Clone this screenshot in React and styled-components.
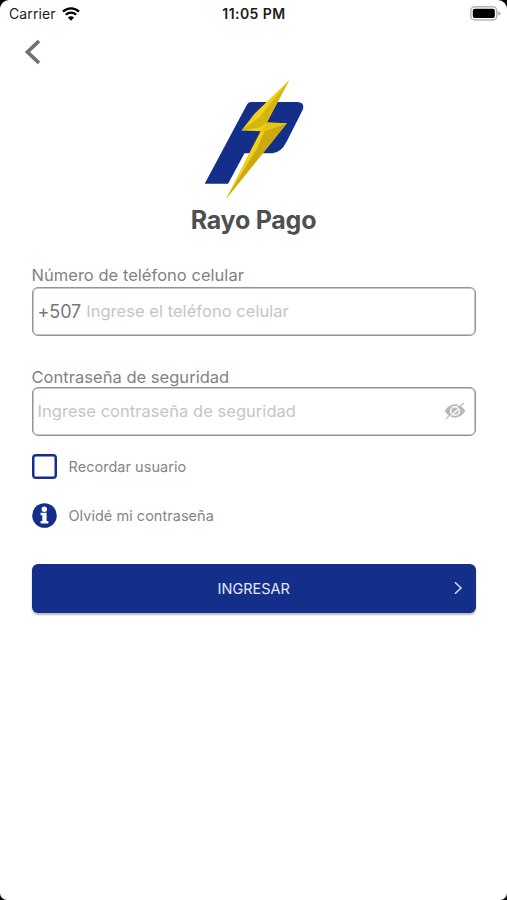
import React, { useState } from "react";
import styled, { createGlobalStyle } from "styled-components";

const GlobalStyle = createGlobalStyle`
  * {
    box-sizing: border-box;
  }

  body {
    margin: 0;
    background-color: #000;
    font-family: Inter, "Liberation Sans", sans-serif;
  }
`;

// styled components
const Screen = styled.div`
  width: 100%;
  height: 100vh;
  overflow: hidden;
  background-color: #fff;
  border-radius: 9px 9px 7px 7px;
`;

const StatusBar = styled.div`
  display: grid;
  grid-template-columns: 1fr auto 1fr;
  align-items: center;
  height: 27px;
  padding: 0 6px 0 9px;
  color: #1c1c1c;
`;

const CarrierBox = styled.div`
  display: flex;
  align-items: center;
  gap: 6px;
`;

const Carrier = styled.span`
  font-size: 14px;
  letter-spacing: 0.1px;
`;

const Clock = styled.span`
  margin-right: 2px;
  font-size: 14px;
  font-weight: 600;
  letter-spacing: 0.45px;
`;

const BatteryIcon = styled.svg`
  justify-self: end;
`;

const TopBar = styled.div`
  display: flex;
  align-items: center;
  height: 50px;
  padding-left: 23px;
`;

const BackButton = styled.button`
  display: flex;
  padding: 0;
  border: none;
  background: none;
`;

const Brand = styled.div`
  display: flex;
  flex-direction: column;
  align-items: center;
  margin-top: 1px;
`;

const BrandName = styled.h1`
  margin: 3px 0 0;
  font-size: 25px;
  line-height: 30px;
  font-weight: 700;
  letter-spacing: -0.25px;
  color: #4f4f4f;
`;

const Form = styled.form`
  display: flex;
  flex-direction: column;
  padding: 0 31px 0 31.5px;
  margin-top: 30px;
`;

const Field = styled.div`
  display: flex;
  flex-direction: column;
  margin-bottom: ${(props) => props.$gap};
`;

const Label = styled.label`
  height: ${(props) => props.$height};
  line-height: 20px;
  font-size: 16.5px;
  letter-spacing: 0.03px;
  color: #828282;
`;

const InputBox = styled.div`
  display: flex;
  align-items: center;
  height: 49px;
  padding: 0 9px 0 5px;
  border: 1px solid #949494;
  border-radius: 6px;
  box-shadow: inset 0 0 0 0.5px #949494;
`;

const Prefix = styled.span`
  margin-right: 5px;
  font-size: 18px;
  letter-spacing: -0.1px;
  color: #777;
`;

const Input = styled.input`
  flex: 1;
  min-width: 0;
  padding: 0;
  border: none;
  outline: none;
  background: none;
  font-family: inherit;
  font-size: 16.5px;
  letter-spacing: 0.04px;
  color: #777;

  &::placeholder {
    color: #c5c5c7;
    opacity: 1;
  }
`;

const IconButton = styled.button`
  display: flex;
  padding: 0;
  border: none;
  background: none;
`;

const OptionRow = styled.div`
  display: flex;
  align-items: center;
  gap: 12px;
  height: 25px;
  margin-bottom: 24px;
  font-size: 14.5px;
  letter-spacing: 0.03px;
  color: #858585;
`;

const CheckBox = styled.button`
  width: 25px;
  height: 25px;
  padding: 0;
  border: 2px solid #142f8a;
  border-radius: 4px;
  background-color: ${(props) => (props.$checked ? "#142f8a" : "#fff")};
  box-shadow: inset 0 0 0 0.5px #142f8a;
`;

const SubmitButton = styled.button`
  display: grid;
  grid-template-columns: 1fr auto 1fr;
  align-items: center;
  height: 49px;
  margin-top: 12px;
  padding: 0 13px;
  border: none;
  border-radius: 6px;
  background-color: #142f8a;
  box-shadow: 0 2px 2px rgba(0, 0, 0, 0.28);
  color: #e3e8f6;
  font-family: inherit;
  font-size: 14.5px;
`;

const SubmitText = styled.span`
  grid-column: 2;
`;

const SubmitArrow = styled.svg`
  justify-self: end;
`;

function Logo() {
  return (
    <svg width="102" height="123.7" viewBox="40 25 305 370">
      <path
        d="M184 97H322Q346 98 338 121L290 216Q273 249 248 250H164L115 341H45L170 107Q175 97 184 97Z"
        fill="#142f8a"
      />
      {/* bolt */}
      <path d="M298 31L194 132L155 182L212 184L108 388L291 160L231 158Z" fill="#f0d01a" />
      <path d="M298 31L208 143L155 182L210 173L231 158Z" fill="#d6b510" />
      <path d="M291 160L224 184L200 238L108 388Z" fill="#cbaa10" />
      <path d="M231 158L291 160L224 184L212 184Z" fill="#e6c416" />
    </svg>
  );
}

function App() {
  const [remember, setRemember] = useState(false);
  const [showPassword, setShowPassword] = useState(false);

  return (
    <Screen>
      <GlobalStyle />
      <StatusBar>
        <CarrierBox>
          <Carrier>Carrier</Carrier>
          <svg width="18" height="14" viewBox="0 0 18 14" fill="none" stroke="#000">
            <path d="M1 4.6C5.5.2 12.5.2 17 4.6" strokeWidth="2.3" />
            <path d="M3.8 7.7C6.8 4.8 11.2 4.8 14.2 7.7" strokeWidth="2.2" />
            <path d="M9 13.8L5.9 10.4C7.6 8.8 10.4 8.8 12.1 10.4Z" fill="#000" stroke="none" />
          </svg>
        </CarrierBox>
        <Clock>11:05 PM</Clock>
        <BatteryIcon width="31" height="15" viewBox="0 0 31 15">
          <rect x="0.8" y="0.8" width="26" height="13.2" rx="4" fill="#fff" stroke="#b5b5b5" strokeWidth="1.5" />
          <rect x="2.8" y="2.8" width="22" height="9.2" rx="2" fill="#000" />
          <path d="M28.3 5.2Q30.6 6 30.6 7.4T28.3 9.6Z" fill="#aaa" />
        </BatteryIcon>
      </StatusBar>

      <TopBar>
        <BackButton type="button" aria-label="Volver">
          <svg width="20" height="26" viewBox="0 0 20 26" fill="none">
            <path d="M16 2L4.5 13L16 24" stroke="#737373" strokeWidth="3.8" />
          </svg>
        </BackButton>
      </TopBar>

      <Brand>
        <Logo />
        <BrandName>Rayo Pago</BrandName>
      </Brand>

      <Form onSubmit={(e) => e.preventDefault()}>
        <Field $gap="31px">
          <Label htmlFor="phone" $height="22px">Número de teléfono celular</Label>
          <InputBox>
            <Prefix>+507</Prefix>
            <Input id="phone" type="tel" placeholder="Ingrese el teléfono celular" />
          </InputBox>
        </Field>

        <Field $gap="18px">
          <Label htmlFor="password" $height="20px">Contraseña de seguridad</Label>
          <InputBox>
            <Input
              id="password"
              type={showPassword ? "text" : "password"}
              placeholder="Ingrese contraseña de seguridad"
            />
            <IconButton type="button" aria-label="Mostrar" onClick={() => setShowPassword(!showPassword)}>
              <svg width="22" height="18" viewBox="0 0 22 18" fill="none">
                <path d="M0.5 9Q5 2.3 11 2.3T21.5 9Q17 15.7 11 15.7T0.5 9Z" fill="#b9b9b9" />
                <circle cx="11" cy="9" r="4.3" stroke="#fff" strokeWidth="1.5" />
                <path d="M8.5 12.3L14 7.3" stroke="#fff" strokeWidth="1.3" />
                <path d="M1.8 17L7.5 11.8M14 5.9L19.8 1" stroke="#b9b9b9" strokeWidth="1.2" />
                <path d="M3.6 16.8L8 12.8M13.6 4.9L18 1" stroke="#fff" strokeWidth="0.9" />
              </svg>
            </IconButton>
          </InputBox>
        </Field>

        <OptionRow>
          <CheckBox
            type="button"
            role="checkbox"
            aria-checked={remember}
            $checked={remember}
            onClick={() => setRemember(!remember)}
          />
          Recordar usuario
        </OptionRow>

        <OptionRow>
          <svg width="25" height="25" viewBox="0 0 25 25">
            <circle cx="12.5" cy="12.5" r="12.3" fill="#142f8a" />
            <circle cx="12.3" cy="6.2" r="2.7" fill="#fff" />
            <path d="M8.6 9.8H14.6V18H16.3V20.4H8.6V18H10.3V12.2H8.6Z" fill="#fff" />
          </svg>
          Olvidé mi contraseña
        </OptionRow>

        <SubmitButton type="submit">
          <SubmitText>INGRESAR</SubmitText>
          <SubmitArrow width="10" height="14" viewBox="0 0 10 14" fill="none">
            <path d="M2 1.2L8 7L2 12.8" stroke="#d5ddf5" strokeWidth="1.5" />
          </SubmitArrow>
        </SubmitButton>
      </Form>
    </Screen>
  );
}

export default App;
